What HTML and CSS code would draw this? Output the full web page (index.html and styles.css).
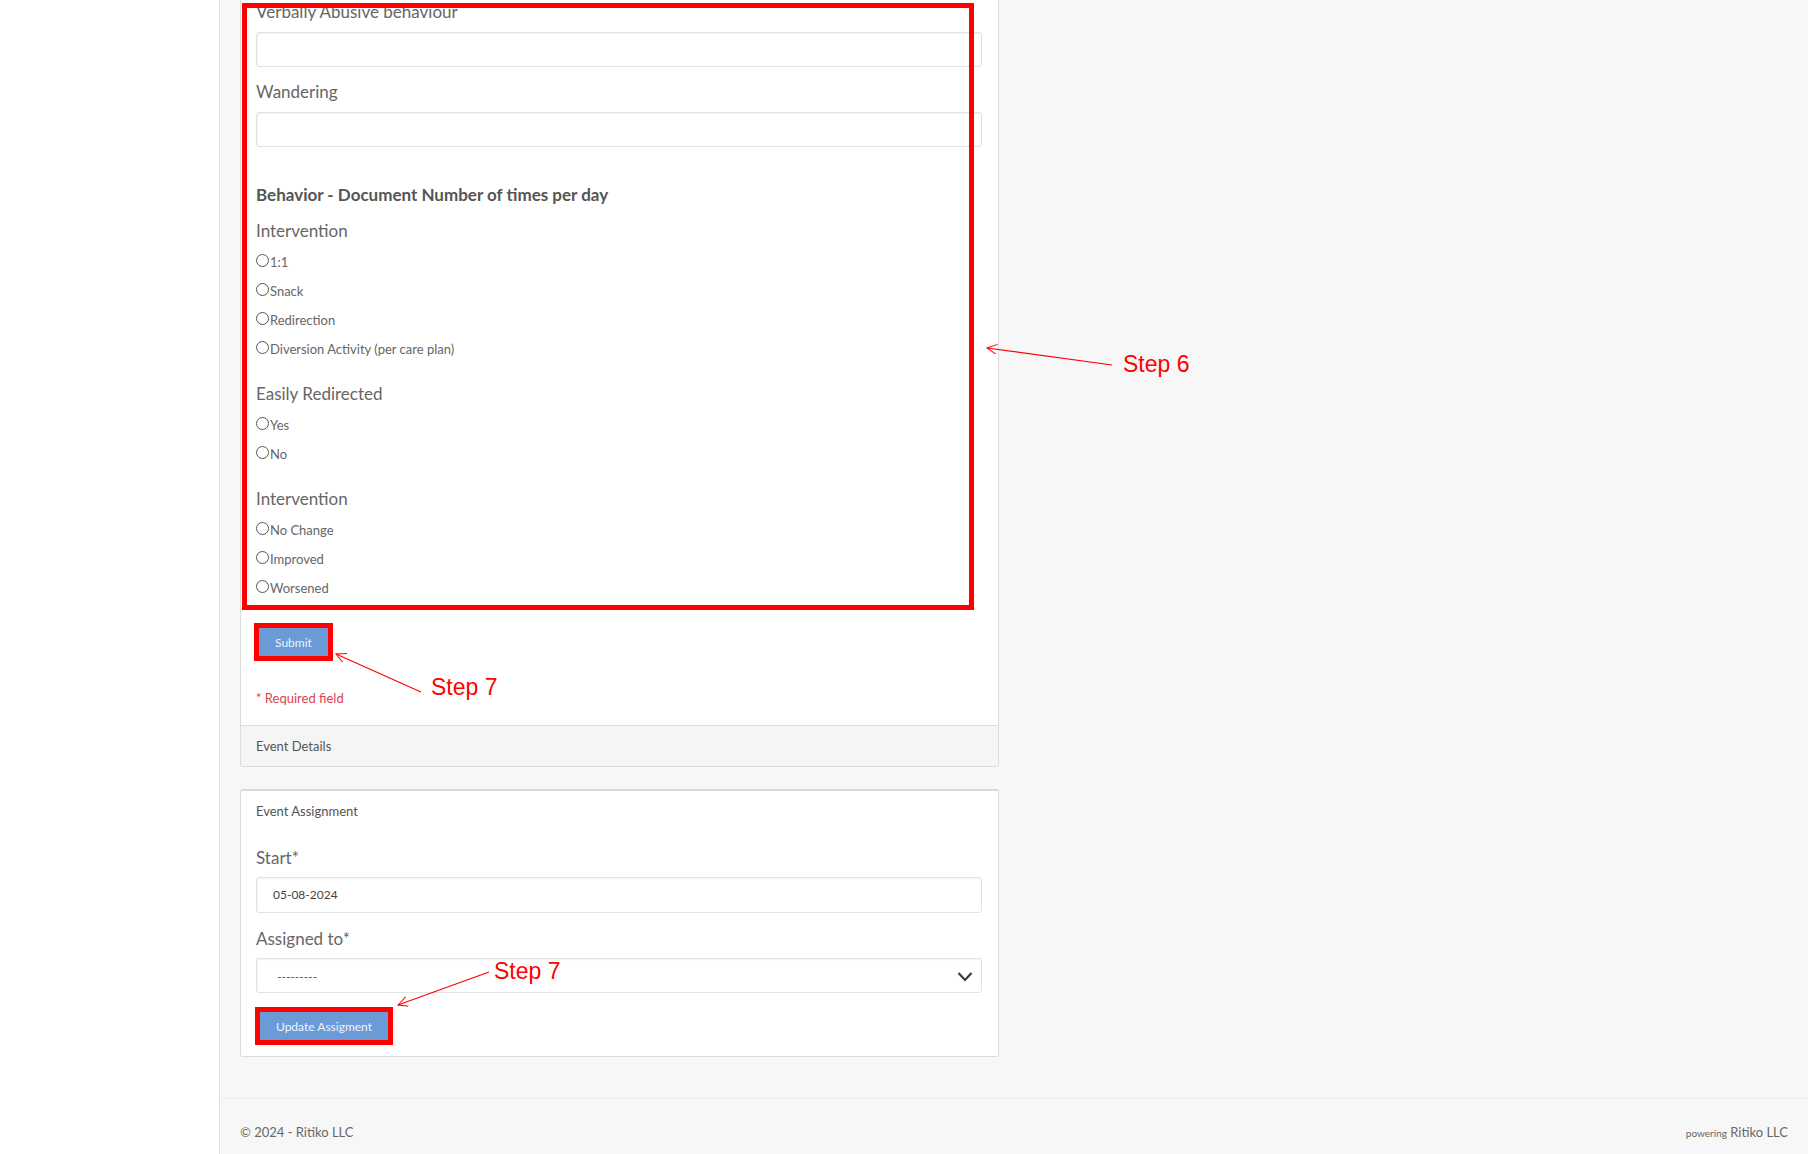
FILE: index.html
```html
<!DOCTYPE html>
<html lang="en">
<head>
    <meta charset="UTF-8">
    <meta name="viewport" content="width=device-width, initial-scale=1.0">
    <title>Event</title>
    <link rel="stylesheet" href="styles.css">
</head>
<body>
	<div class="layout">
		<aside class="sidebar"></aside>
		<div class="main">
			<div class="content">
				<div class="card cardCut">
					<div class="cardBody">
						<div class="field">
							<label>Verbally Abusive behaviour</label>
							<div class="input"></div>
						</div>
						<div class="field">
							<label>Wandering</label>
							<div class="input"></div>
						</div>

						<h4 class="sectionTitle">Behavior - Document Number of times per day</h4>

						<div class="radioGroup">
							<div class="groupLabel">Intervention</div>
							<label class="option"><input type="radio" name="int1">1:1</label>
							<label class="option"><input type="radio" name="int1">Snack</label>
							<label class="option"><input type="radio" name="int1">Redirection</label>
							<label class="option"><input type="radio" name="int1">Diversion Activity (per care plan)</label>
						</div>
						<div class="radioGroup">
							<div class="groupLabel">Easily Redirected</div>
							<label class="option"><input type="radio" name="redir">Yes</label>
							<label class="option"><input type="radio" name="redir">No</label>
						</div>
						<div class="radioGroup last">
							<div class="groupLabel">Intervention</div>
							<label class="option"><input type="radio" name="int2">No Change</label>
							<label class="option"><input type="radio" name="int2">Improved</label>
							<label class="option"><input type="radio" name="int2">Worsened</label>
						</div>

						<div class="submitRow">
							<button class="btn marked">Submit</button>
						</div>
						<p class="required">* Required field</p>
					</div>
					<div class="cardFooter">Event Details</div>
				</div>

				<div class="card cardAssign">
					<div class="cardBody">
						<div class="cardTitle">Event Assignment</div>
						<div class="field tight">
							<label>Start*</label>
							<div class="input tall"><span class="value">05-08-2024</span></div>
						</div>
						<div class="field tight">
							<label>Assigned to*</label>
							<div class="input select">
								<span class="placeholder">---------</span>
								<svg width="16" height="11" viewBox="0 0 16 11"><path d="M1.5 2 L8 9 L14.5 2" fill="none" stroke="#3a3a3a" stroke-width="2.2"/></svg>
							</div>
						</div>
						<div class="assignRow">
							<button class="btn marked">Update Assigment</button>
						</div>
					</div>
				</div>
			</div>
			<footer class="footer">
				<span>&copy; 2024 - Ritiko LLC</span>
				<span><small>powering</small> Ritiko LLC</span>
			</footer>
		</div>
	</div>

	<!-- annotation layer -->
	<div class="notes">
		<div class="noteBox"></div>
		<svg class="noteArrows" width="1808" height="1154" viewBox="0 0 1808 1154">
			<defs>
				<marker id="head" markerUnits="userSpaceOnUse" markerWidth="12" markerHeight="12" refX="10" refY="5" orient="auto">
					<path d="M0,0 L10,5 L0,10" fill="none" stroke="#f00" stroke-width="1"/>
				</marker>
			</defs>
			<line x1="1112" y1="365" x2="987" y2="348" stroke="#f00" stroke-width="1.2" marker-end="url(#head)"/>
			<line x1="421" y1="692" x2="336" y2="654" stroke="#f00" stroke-width="1.2" marker-end="url(#head)"/>
			<line x1="489" y1="972" x2="398" y2="1005" stroke="#f00" stroke-width="1.2" marker-end="url(#head)"/>
			<text x="1123" y="372" class="stepText">Step 6</text>
			<text x="431" y="695" class="stepText">Step 7</text>
			<text x="494" y="979" class="stepText">Step 7</text>
		</svg>
	</div>
</body>
</html>
```

FILE: styles.css
```css
body,html{
    margin: 0;
    padding: 0;
}
body{
    font-family: Lato, "Open Sans", sans-serif;
    background: #f7f7f7;
    color: #666;
    position: relative;
    height: 1154px;
    overflow: hidden;
}
.layout{
    display: flex;
    height: 1154px;
}
.sidebar{
    width: 219px;
    flex-shrink: 0;
    background: #fff;
    border-right: 1px solid #e0e0e0;
}
.main{
    flex: 1;
    display: flex;
    flex-direction: column;
}
.content{
    flex: 1;
    padding: 0 20px;
}
.card{
    width: 759px;
    box-sizing: border-box;
    background: #fff;
    border: 1px solid #dcdcdc;
    border-radius: 3px;
}
.cardCut{
    border-top: none;
    border-radius: 0 0 3px 3px;
}
.cardBody{
    padding: 0 16px 19px 15px;
}
.field{
    margin-bottom: 13px;
}
.field label{
    display: block;
    font-size: 17px;
    line-height: 24px;
    margin-bottom: 8px;
}
.input{
    height: 35px;
    box-sizing: border-box;
    border: 1px solid #e2e2e2;
    border-radius: 3px;
    box-shadow: inset 1px 1px 2px rgba(0,0,0,0.05);
    background: #fff;
}
.sectionTitle{
    font-size: 17px;
    line-height: 24px;
    font-weight: 700;
    color: #555;
    margin: 36px 0 12px;
}
.groupLabel{
    font-size: 17px;
    line-height: 24px;
    margin-bottom: 4px;
}
.radioGroup{
    margin-bottom: 19px;
}
.radioGroup.last{margin-bottom: 0;}
.option{
    display: flex;
    align-items: center;
    height: 29px;
    font-size: 13px;
    color: #666;
}
.option input{
    appearance: none;
    -webkit-appearance: none;
    width: 13px;
    height: 13px;
    margin: 0 1px 3px 0;
    border: 1px solid #555;
    border-radius: 50%;
    background: #fff;
}
.btn{
    height: 28px;
    padding: 0 16px;
    border: 0;
    border-radius: 0;
    background: #6b9bd6;
    color: #eef4fc;
    font-family: Lato, sans-serif;
    font-size: 12px;
}
.marked{
    outline: 5px solid #f00;
}
.submitRow{
    margin: 26px 0 0 3px;
}
.required{
    margin: 34px 0 0;
    font-size: 13px;
    line-height: 16px;
    color: #d9434e;
}
.cardFooter{
    height: 40px;
    line-height: 40px;
    padding: 0 15px;
    border-top: 1px solid #dcdcdc;
    background: #f5f5f5;
    font-size: 13px;
    color: #555;
}
.cardAssign{
    margin-top: 22px;
    border-top: 2px solid #d3dedb;
}
.cardAssign .cardBody{
    padding: 12px 16px 16px 15px;
}
.cardTitle{
    font-size: 13px;
    line-height: 16px;
    color: #555;
    margin-bottom: 27px;
}
.field.tight{margin-bottom: 14px;}
.field.tight label{margin-bottom: 7px;}
.input.tall{height: 36px;}
.input .value{
    display: block;
    padding-left: 16px;
    line-height: 34px;
    font-size: 12px;
    color: #444;
}
.select{
    display: flex;
    align-items: center;
    justify-content: space-between;
    padding: 2px 8px 0 20px;
}
.select .placeholder{
    font-size: 12px;
    color: #555;
}
.assignRow{
    margin: 19px 0 0 4px;
}
.footer{
    height: 56px;
    box-sizing: border-box;
    padding: 25px 20px 0;
    border-top: 1px solid #ededed;
    display: flex;
    justify-content: space-between;
    font-size: 13px;
    line-height: 16px;
    color: #666;
}
.footer small{
    font-size: 10px;
}
.notes{
    position: absolute;
    top: 0;
    left: 0;
    width: 1808px;
    height: 1154px;
    pointer-events: none;
}
.noteBox{
    position: absolute;
    left: 242px;
    top: 3px;
    width: 732px;
    height: 607px;
    box-sizing: border-box;
    border: 5px solid #f00;
}
.noteArrows{
    position: absolute;
    top: 0;
    left: 0;
}
.stepText{
    font-family: "Liberation Sans", Arial, sans-serif;
    font-size: 23px;
    fill: #f00;
}
```
